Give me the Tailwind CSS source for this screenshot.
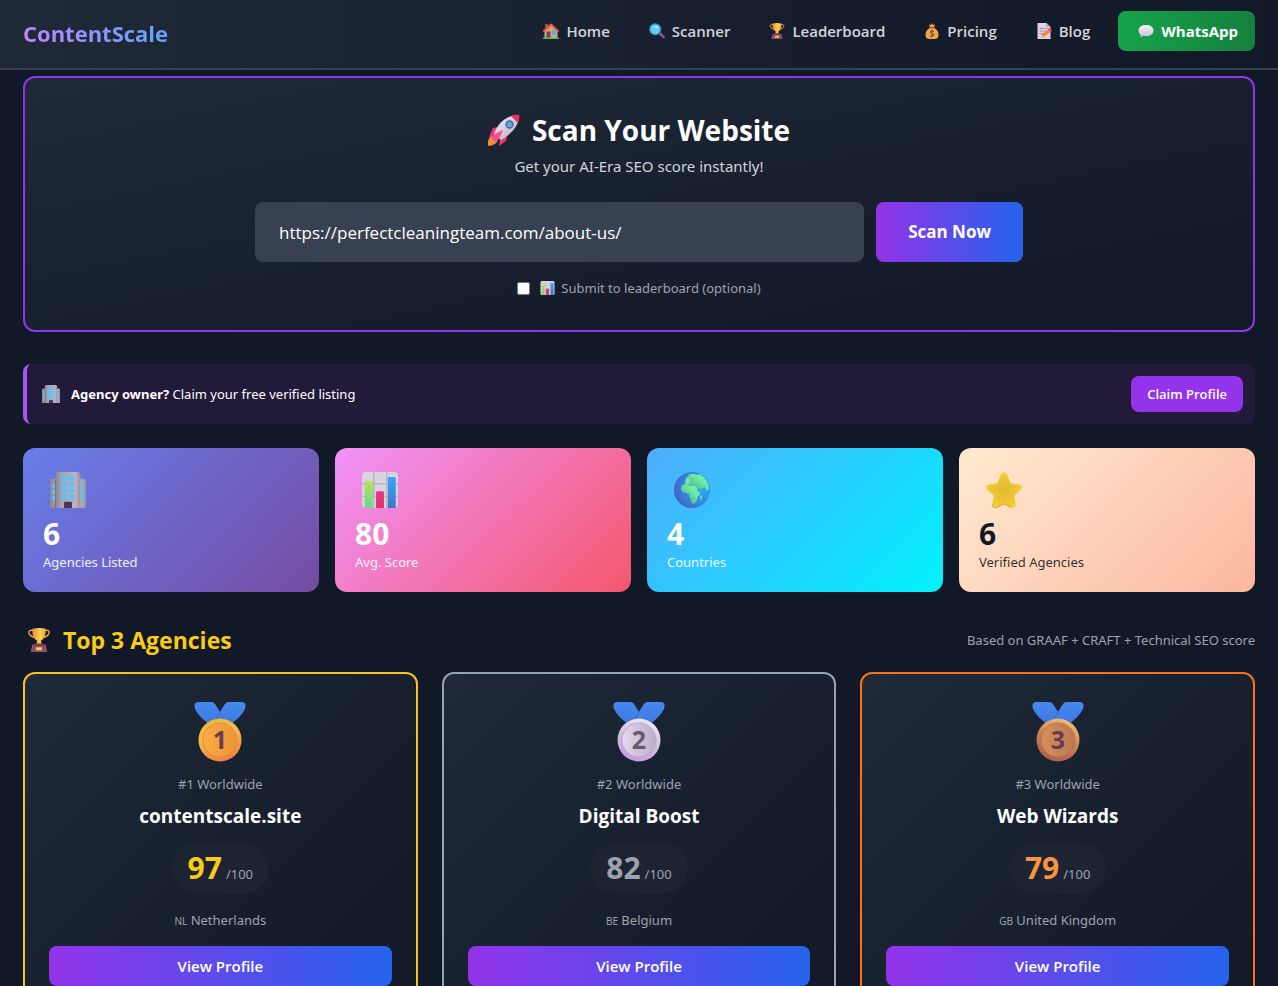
<!DOCTYPE html>
<html lang="en">
<head>
<meta charset="utf-8">
<meta name="viewport" content="width=device-width, initial-scale=1">
<title>ContentScale</title>
<script src="https://cdn.jsdelivr.net/npm/@tailwindcss/browser@4"></script>
</head>
<body class="min-h-screen bg-[#111827] font-['Open_Sans','Noto_Sans',sans-serif] text-[15px] leading-6 text-white">

<!-- Shared icon symbols -->
<svg class="absolute size-0" aria-hidden="true">
  <defs>
    <linearGradient id="gWall" x1="0" x2="1"><stop offset="0" stop-color="#8f8795"/><stop offset=".25" stop-color="#aaa3b0"/><stop offset=".8" stop-color="#bcb4c4"/><stop offset="1" stop-color="#9b939f"/></linearGradient>
    <linearGradient id="gGreen" x2="0" y2="1"><stop offset="0" stop-color="#b6e552"/><stop offset="1" stop-color="#5fdb8c"/></linearGradient>
    <linearGradient id="gRed" x2="0" y2="1"><stop offset="0" stop-color="#f0308f"/><stop offset="1" stop-color="#d8375c"/></linearGradient>
    <linearGradient id="gBlue" x2="0" y2="1"><stop offset="0" stop-color="#35a8f5"/><stop offset="1" stop-color="#3f78c8"/></linearGradient>
    <radialGradient id="gSea" cx=".75" cy=".4" r=".85"><stop offset="0" stop-color="#2fb0fa"/><stop offset=".5" stop-color="#338be0"/><stop offset="1" stop-color="#4a55c0"/></radialGradient>
    <linearGradient id="gLand" x1="1" x2="0" y2="1"><stop offset="0" stop-color="#7dffb0"/><stop offset=".4" stop-color="#6ceaa6"/><stop offset="1" stop-color="#459a84"/></linearGradient>
    <radialGradient id="gStar" cx=".5" cy=".5" r=".55"><stop offset="0" stop-color="#dfbc36"/><stop offset=".6" stop-color="#efc52f"/><stop offset="1" stop-color="#f5d43a"/></radialGradient>
    <linearGradient id="gCup" x1="0" x2="1"><stop offset="0" stop-color="#e98a3c"/><stop offset=".6" stop-color="#fcd34f"/><stop offset="1" stop-color="#e9a33c"/></linearGradient>
    <linearGradient id="gRocket" x1="0" y1="0" x2="1" y2="1"><stop offset="0" stop-color="#f6eef8"/><stop offset="1" stop-color="#b9a9c6"/></linearGradient>
    <linearGradient id="gBubble" x2="0" y2="1"><stop offset="0" stop-color="#f9f4fc"/><stop offset="1" stop-color="#cbbcdc"/></linearGradient>
    <linearGradient id="gRibbon" x2="0" y2="1"><stop offset="0" stop-color="#4489f0"/><stop offset="1" stop-color="#3f78e0"/></linearGradient>
    <linearGradient id="gGoldRim" x1=".3" x2=".6" y2="1"><stop offset="0" stop-color="#e9b83f"/><stop offset=".4" stop-color="#f6bb4a"/><stop offset="1" stop-color="#f07f45"/></linearGradient>
    <linearGradient id="gGold" x2="1"><stop offset="0" stop-color="#fbab47"/><stop offset="1" stop-color="#ea9635"/></linearGradient>
    <linearGradient id="gSilverRim" x1=".7" x2=".3" y2="1"><stop offset="0" stop-color="#f1e9f5"/><stop offset=".5" stop-color="#cdbfda"/><stop offset="1" stop-color="#c69be8"/></linearGradient>
    <linearGradient id="gSilver" x2="1"><stop offset="0" stop-color="#e3d8ec"/><stop offset="1" stop-color="#bcaccb"/></linearGradient>
    <linearGradient id="gBronzeRim" x1=".7" x2=".3" y2="1"><stop offset="0" stop-color="#f7bd79"/><stop offset=".5" stop-color="#cb8350"/><stop offset="1" stop-color="#a85b52"/></linearGradient>
    <linearGradient id="gBronze" x2="1"><stop offset="0" stop-color="#d5905c"/><stop offset="1" stop-color="#bd7850"/></linearGradient>
  </defs>
  <symbol id="building" viewBox="0 0 32 32">
    <path d="M0 32V8q0-2 2-2h28q2 0 2 2v24z" fill="url(#gWall)"/>
    <path d="M5 32V2.500q0-2.500 2.500-2.500h17q2.500 0 2.500 2.500V32z" fill="url(#gWall)"/>
    <path d="M5 32V7" stroke="#766e7d" stroke-width=".8"/>
    <g fill="#4cc9fc"><path d="M10 4h5v3.500h-5zM16.500 4h5v3.500h-5zM10 9.500h5V13h-5zM16.500 9.500h5V13h-5zM10 15h5v3.500h-5zM16.500 15h5v3.500h-5zM10 20.500h5V24h-5zM16.500 20.500h5V24h-5z"/><path d="M2 10.500h2.500V14H2zM2 16h2.500v3.500H2zM2 21.500h2.500V25H2zM27.500 10.500H30V14h-2.500zM27.500 16H30v3.500h-2.500zM27.500 21.500H30V25h-2.500z"/></g>
    <path d="M12.500 32v-4.500q0-1 1-1h5q1 0 1 1V32z" fill="#463852"/>
  </symbol>
  <symbol id="chart" viewBox="0 0 32 32">
    <rect width="32" height="32" rx="3.500" fill="#d9d3e0"/>
    <path d="M10.500 0v32M22 0v32M0 10.500h32M0 21.500h32" stroke="#b8b1c2" stroke-width="1.300"/>
    <path d="M2.500 32V9q0-1 1-1h5q1 0 1 1v23z" fill="url(#gGreen)"/>
    <path d="M12.500 32V18q0-1 1-1h5q1 0 1 1v14z" fill="url(#gRed)"/>
    <path d="M23 32V5.500q0-1 1-1h5q1 0 1 1V32z" fill="url(#gBlue)"/>
  </symbol>
  <symbol id="globe" viewBox="0 0 32 32">
    <circle cx="16" cy="16" r="16" fill="url(#gSea)"/>
    <path d="M14 2q2-1 5 0 2 1 4 0 4 2 6 6 2 3 2 7-1 2-2 1l-2-3-2 2-2-1-2 2-3-3-2-1-3 1-2-3 2-3-2-2z" fill="url(#gLand)"/>
    <path d="M7 12q3-2 5-1 2 2 4 1l4 1 1 4 2 1q0 3-2 4l-1 4q-2 3-4 2l-2-6-1-3q-3 0-5-1-3-2-1-6zM24 20l1 2-1 3-1-2z" fill="url(#gLand)"/>
    <path d="M10 8l1-3 3 1 1 2-2 1 2 1-3 1-2-1z" fill="#6fe9a9"/>
  </symbol>
  <symbol id="star" viewBox="0 0 32 32">
    <path d="M13.500 1.500q2.500-3 5 0l3 7.500q1 1.500 3 1.500l5 .5q4 1 2 4l-6.500 6 1.500 7.500q0 4-4 3l-5-2.500q-1.500-1-3 0l-5 2.500q-4 1-4-3L7 21 .5 15q-2-3 2-4l5-.5q2 0 3-1.500z" fill="url(#gStar)"/>
    <path d="M5.500 28.500q0 4 4 3l5-2.500q1.500-1 3 0l5 2.500" fill="none" stroke="#c9922d" stroke-opacity=".6"/>
  </symbol>
  <symbol id="trophy" viewBox="0 0 32 32">
    <path d="M8 3.500C2 2 1 6 4 9.500q3 3 7 3M24 3.500c6-1.500 7 2.500 4 6q-3 3-7 3" fill="none" stroke="#e9a347" stroke-width="2"/>
    <path d="M7 1q9-2 18 0 .5 13-6.500 16l1 4h-7l1-4Q6.500 14 7 1z" fill="url(#gCup)"/>
    <path d="M7 22h18l2 10H5z" fill="#8d5164"/><path d="M9 21h14l1 3H8z" fill="#753f57"/>
    <rect x="12" y="25.500" width="8" height="4" rx="1" fill="#fbc85c"/>
  </symbol>
  <symbol id="house" viewBox="0 0 32 32">
    <path d="M4 2h6v10H4z" fill="#a64b48"/><path d="M3 15 16 3l13 12v15H3z" fill="#dba577"/>
    <path d="M2 16 16 3l14 13" fill="none" stroke="#ec5a42" stroke-width="4" stroke-linecap="round" stroke-linejoin="round"/>
    <path d="M7 17h8v13H7z" fill="#7b4552"/><path d="M18 15h8v8h-8z" fill="#42b7f3"/><path d="M0 29h32v3H0z" fill="#3fc56b"/>
  </symbol>
  <symbol id="lens" viewBox="0 0 32 32">
    <path d="m22 21 7 7" stroke="#80528f" stroke-width="6" stroke-linecap="round"/>
    <circle cx="12.500" cy="12.500" r="11" fill="#61cff1" stroke="#3b83b5" stroke-width="2.500"/><circle cx="15" cy="8" r="3" fill="#a5eafb"/>
  </symbol>
  <symbol id="money" viewBox="0 0 32 32">
    <path d="m10 3 4 1 2-4 2 4 4-1-2 6h-8z" fill="#e8a543"/><path d="M11 10h10c6 3 8 9 8 14 0 6-4 8-8 8H11c-4 0-8-2-8-8 0-5 2-11 8-14z" fill="#f0a546"/>
    <path d="M10 10h12" stroke="#a65e48" stroke-width="2"/>
    <path d="M20 17q-4-3-7 0c-2 5 7 3 7 7-2 4-6 3-8 1m4-11v14" fill="none" stroke="#704340" stroke-width="2"/>
  </symbol>
  <symbol id="memo" viewBox="0 0 32 32">
    <path d="M3 0h18l8 8v24H3z" fill="#ddd3e4"/><path d="M21 0v8h8z" fill="#aaa0b8"/>
    <path d="M7 11h16M7 16h12M7 21h9" stroke="#9b90a8" stroke-width="1.800"/>
    <path d="m9 30 2-7 12-10 6 5-13 10z" fill="#f6853e"/><path d="m23 13 4-3 5 5-3 3z" fill="#e44d63"/><path d="m9 30 2-6 4 4z" fill="#f6cfa2"/>
  </symbol>
  <symbol id="bubble" viewBox="0 0 32 32">
    <path d="M16 4c9 0 15 4 15 11s-6 11-15 11c-2 0-4 0-5-1l-6 4q1-4 0-6-4-3-4-8C1 8 7 4 16 4z" fill="url(#gBubble)"/>
  </symbol>
  <symbol id="rocket" viewBox="0 0 32 32">
    <path d="M2 23q4-3 7 0 2 4-2 7-3 2-7 2-1-5 2-9z" fill="#f58a38"/>
    <path d="m10 13-5 1-4 9 7-2zM19 22l-1 5-7 5 1-8z" fill="#ee3677"/>
    <path d="M6 20C10 9 18 2 29 1q3 0 2 3-2 13-18 22z" fill="url(#gRocket)"/>
    <path d="M23 2q4-2 8-1 1 4-1 8z" fill="#e9305c"/>
    <path d="m7 20 8-4-4 9-3 3-5-4z" fill="#f64c89"/>
    <circle cx="21.500" cy="10.500" r="3.500" fill="#5aa5f3" stroke="#51617f" stroke-width="1.300"/>
  </symbol>
  <symbol id="ribbon" viewBox="0 0 60 60">
    <path d="M8 0h13q3 0 4 2l5 8 8 12H19Q9 15 5 7 3 0 8 0z" fill="url(#gRibbon)"/>
    <path d="M52 0H39q-3 0-4 2L22 22h19q10-7 14-15 2-7-3-7z" fill="url(#gRibbon)"/>
    <path d="M30 10 24 21" stroke="#3668c9"/>
  </symbol>
</svg>

<header class="border-b-2 border-[#374151] bg-[linear-gradient(to_right,#1f2937,#111827)]">
  <div class="flex items-center justify-between px-[23px] pt-[11px] pb-[17px]">
    <a href="#" class="bg-[linear-gradient(to_right,#c084fc,#60a5fa)] bg-clip-text pt-1 text-[22px] leading-8 font-bold text-transparent">ContentScale</a>
    <nav class="flex items-center gap-3 font-semibold text-[#d1d5db]">
      <a href="#" class="flex items-center gap-1 px-3"><svg class="h-4 w-[22px]"><use href="#house"/></svg>Home</a>
      <a href="#" class="flex items-center gap-1 px-3"><svg class="h-4 w-[22px]"><use href="#lens"/></svg>Scanner</a>
      <a href="#" class="flex items-center gap-1 px-3"><svg class="h-4 w-[22px]"><use href="#trophy"/></svg>Leaderboard</a>
      <a href="#" class="flex items-center gap-1 px-3"><svg class="h-4 w-[22px]"><use href="#money"/></svg>Pricing</a>
      <a href="#" class="flex items-center gap-1 px-3"><svg class="h-4 w-[22px]"><use href="#memo"/></svg>Blog</a>
      <a href="#" class="ml-1 flex items-center gap-1 rounded-lg bg-[linear-gradient(to_right,#16a34a,#15803d)] px-[17px] py-2 font-bold text-white"><svg class="h-4 w-[22px]"><use href="#bubble"/></svg>WhatsApp</a>
    </nav>
  </div>
</header>

<main class="px-[23px] pt-1.5 pb-8">
  <section class="rounded-xl border-2 border-[#9333ea] bg-[linear-gradient(to_bottom_right,#1f2937,#111827)] p-8 text-center">
    <h1 class="mb-1 flex items-center justify-center gap-3 text-[28px] leading-10 font-bold"><svg class="size-8"><use href="#rocket"/></svg>Scan Your Website</h1>
    <p class="mb-6 font-['Noto_Sans',sans-serif] text-[#d1d5db]">Get your AI-Era SEO score instantly!</p>
    <form class="mx-auto max-w-3xl">
      <div class="flex gap-3">
        <input type="text" aria-label="Website URL" value="https://perfectcleaningteam.com/about-us/" class="h-[60px] min-w-0 flex-1 rounded-lg bg-[#374151] px-6 text-[17px] text-white">
        <button type="button" class="rounded-lg bg-[linear-gradient(to_right,#9333ea,#2563eb)] px-8 text-[17px] font-bold">Scan Now</button>
      </div>
      <label for="submit" class="mt-4 flex items-center justify-center font-['Noto_Sans',sans-serif] text-[13px] leading-5 text-[#9ca3af]"><input id="submit" type="checkbox" class="mr-2 size-[13px]"><svg class="mr-1 h-3.5 w-[19px]"><use href="#chart"/></svg>Submit to leaderboard (optional)</label>
    </form>
  </section>

  <section class="mt-8 flex items-center justify-between rounded-lg border-l-4 border-[#a855f7] bg-[#211a38] p-3">
    <p class="flex items-center gap-2 font-['Noto_Sans',sans-serif] text-[13px] leading-5"><svg class="h-[18px] w-6"><use href="#building"/></svg><span><strong class="font-bold">Agency owner?</strong> Claim your free verified listing</span></p>
    <button type="button" class="rounded-lg bg-[#9333ea] px-4 py-2 text-[13px] leading-5 font-semibold">Claim Profile</button>
  </section>

  <section class="mt-6 grid grid-cols-4 gap-4">
    <div class="rounded-xl bg-[linear-gradient(135deg,#667eea,#764ba2)] p-5">
      <svg class="mt-1 mb-2 h-9 w-[50px]"><use href="#building"/></svg>
      <div class="text-[30px] leading-9 font-bold">6</div>
      <div class="font-['Noto_Sans',sans-serif] text-[13px] leading-5 text-white/90">Agencies Listed</div>
    </div>
    <div class="rounded-xl bg-[linear-gradient(135deg,#f093fb,#f5576c)] p-5">
      <svg class="mt-1 mb-2 h-9 w-[50px]"><use href="#chart"/></svg>
      <div class="text-[30px] leading-9 font-bold">80</div>
      <div class="font-['Noto_Sans',sans-serif] text-[13px] leading-5 text-white/90">Avg. Score</div>
    </div>
    <div class="rounded-xl bg-[linear-gradient(135deg,#4facfe,#00f2fe)] p-5">
      <svg class="mt-1 mb-2 h-9 w-[50px]"><use href="#globe"/></svg>
      <div class="text-[30px] leading-9 font-bold">4</div>
      <div class="font-['Noto_Sans',sans-serif] text-[13px] leading-5 text-white/90">Countries</div>
    </div>
    <div class="rounded-xl bg-[linear-gradient(135deg,#ffecd2,#fcb69f)] p-5 text-[#111827]">
      <svg class="mt-1 mb-2 h-9 w-[50px]"><use href="#star"/></svg>
      <div class="text-[30px] leading-9 font-bold">6</div>
      <div class="font-['Noto_Sans',sans-serif] text-[13px] leading-5 text-[#111827]/90">Verified Agencies</div>
    </div>
  </section>

  <section class="mt-8">
    <div class="mb-4 flex items-center justify-between">
      <h2 class="flex items-center gap-2 text-[23px] leading-8 font-bold text-[#facc15]"><svg class="h-6 w-8"><use href="#trophy"/></svg>Top 3 Agencies</h2>
      <p class="font-['Noto_Sans',sans-serif] text-[13px] leading-5 text-[#9ca3af]">Based on GRAAF + CRAFT + Technical SEO score</p>
    </div>
    <div class="grid grid-cols-3 gap-6 text-center">
      <article class="flex flex-col items-center rounded-xl border-2 border-[#fbbf24] bg-[linear-gradient(135deg,#1f2937,#111827)] p-6">
        <svg class="mt-1 mb-3 size-[60px]" viewBox="0 0 60 60"><use href="#ribbon"/><circle cx="30" cy="38" r="21.500" fill="url(#gGoldRim)"/><circle cx="30" cy="38" r="17" fill="url(#gGold)" stroke="#e18c35"/><text x="30" y="47" text-anchor="middle" class="text-[25px] font-bold" fill="#6c3c55">1</text></svg>
        <p class="font-['Noto_Sans',sans-serif] text-[13px] leading-5 text-[#9ca3af]">#1 Worldwide</p>
        <h3 class="mt-2 text-[19px] leading-7 font-bold">contentscale.site</h3>
        <p class="mt-3 flex items-baseline gap-1 rounded-full bg-[#1c2433] px-4 py-2"><span class="text-[30px] leading-9 font-bold text-[#facc15]">97</span><span class="font-['Noto_Sans',sans-serif] text-[13px] leading-5 text-[#9ca3af]">/100</span></p>
        <p class="mt-4 font-['Noto_Sans',sans-serif] text-[13px] leading-5 text-[#9ca3af]"><span class="text-[10px]">NL</span> Netherlands</p>
        <button type="button" class="mt-[15px] w-full rounded-lg bg-[linear-gradient(to_right,#9333ea,#2563eb)] py-2 font-semibold">View Profile</button>
      </article>
      <article class="flex flex-col items-center rounded-xl border-2 border-[#94a3b8] bg-[linear-gradient(135deg,#1f2937,#111827)] p-6">
        <svg class="mt-1 mb-3 size-[60px]" viewBox="0 0 60 60"><use href="#ribbon"/><circle cx="30" cy="38" r="21.500" fill="url(#gSilverRim)"/><circle cx="30" cy="38" r="17" fill="url(#gSilver)" stroke="#bba5cf"/><text x="30" y="47" text-anchor="middle" class="text-[25px] font-bold" fill="#655b6b">2</text></svg>
        <p class="font-['Noto_Sans',sans-serif] text-[13px] leading-5 text-[#9ca3af]">#2 Worldwide</p>
        <h3 class="mt-2 text-[19px] leading-7 font-bold">Digital Boost</h3>
        <p class="mt-3 flex items-baseline gap-1 rounded-full bg-[#1c2433] px-4 py-2"><span class="text-[30px] leading-9 font-bold text-[#9ca3af]">82</span><span class="font-['Noto_Sans',sans-serif] text-[13px] leading-5 text-[#9ca3af]">/100</span></p>
        <p class="mt-4 font-['Noto_Sans',sans-serif] text-[13px] leading-5 text-[#9ca3af]"><span class="text-[10px]">BE</span> Belgium</p>
        <button type="button" class="mt-[15px] w-full rounded-lg bg-[linear-gradient(to_right,#9333ea,#2563eb)] py-2 font-semibold">View Profile</button>
      </article>
      <article class="flex flex-col items-center rounded-xl border-2 border-[#f97316] bg-[linear-gradient(135deg,#1f2937,#111827)] p-6">
        <svg class="mt-1 mb-3 size-[60px]" viewBox="0 0 60 60"><use href="#ribbon"/><circle cx="30" cy="38" r="21.500" fill="url(#gBronzeRim)"/><circle cx="30" cy="38" r="17" fill="url(#gBronze)" stroke="#b7744e"/><text x="30" y="47" text-anchor="middle" class="text-[25px] font-bold" fill="#693c4b">3</text></svg>
        <p class="font-['Noto_Sans',sans-serif] text-[13px] leading-5 text-[#9ca3af]">#3 Worldwide</p>
        <h3 class="mt-2 text-[19px] leading-7 font-bold">Web Wizards</h3>
        <p class="mt-3 flex items-baseline gap-1 rounded-full bg-[#1c2433] px-4 py-2"><span class="text-[30px] leading-9 font-bold text-[#fb923c]">79</span><span class="font-['Noto_Sans',sans-serif] text-[13px] leading-5 text-[#9ca3af]">/100</span></p>
        <p class="mt-4 font-['Noto_Sans',sans-serif] text-[13px] leading-5 text-[#9ca3af]"><span class="text-[10px]">GB</span> United Kingdom</p>
        <button type="button" class="mt-[15px] w-full rounded-lg bg-[linear-gradient(to_right,#9333ea,#2563eb)] py-2 font-semibold">View Profile</button>
      </article>
    </div>
  </section>
</main>
</body>
</html>
